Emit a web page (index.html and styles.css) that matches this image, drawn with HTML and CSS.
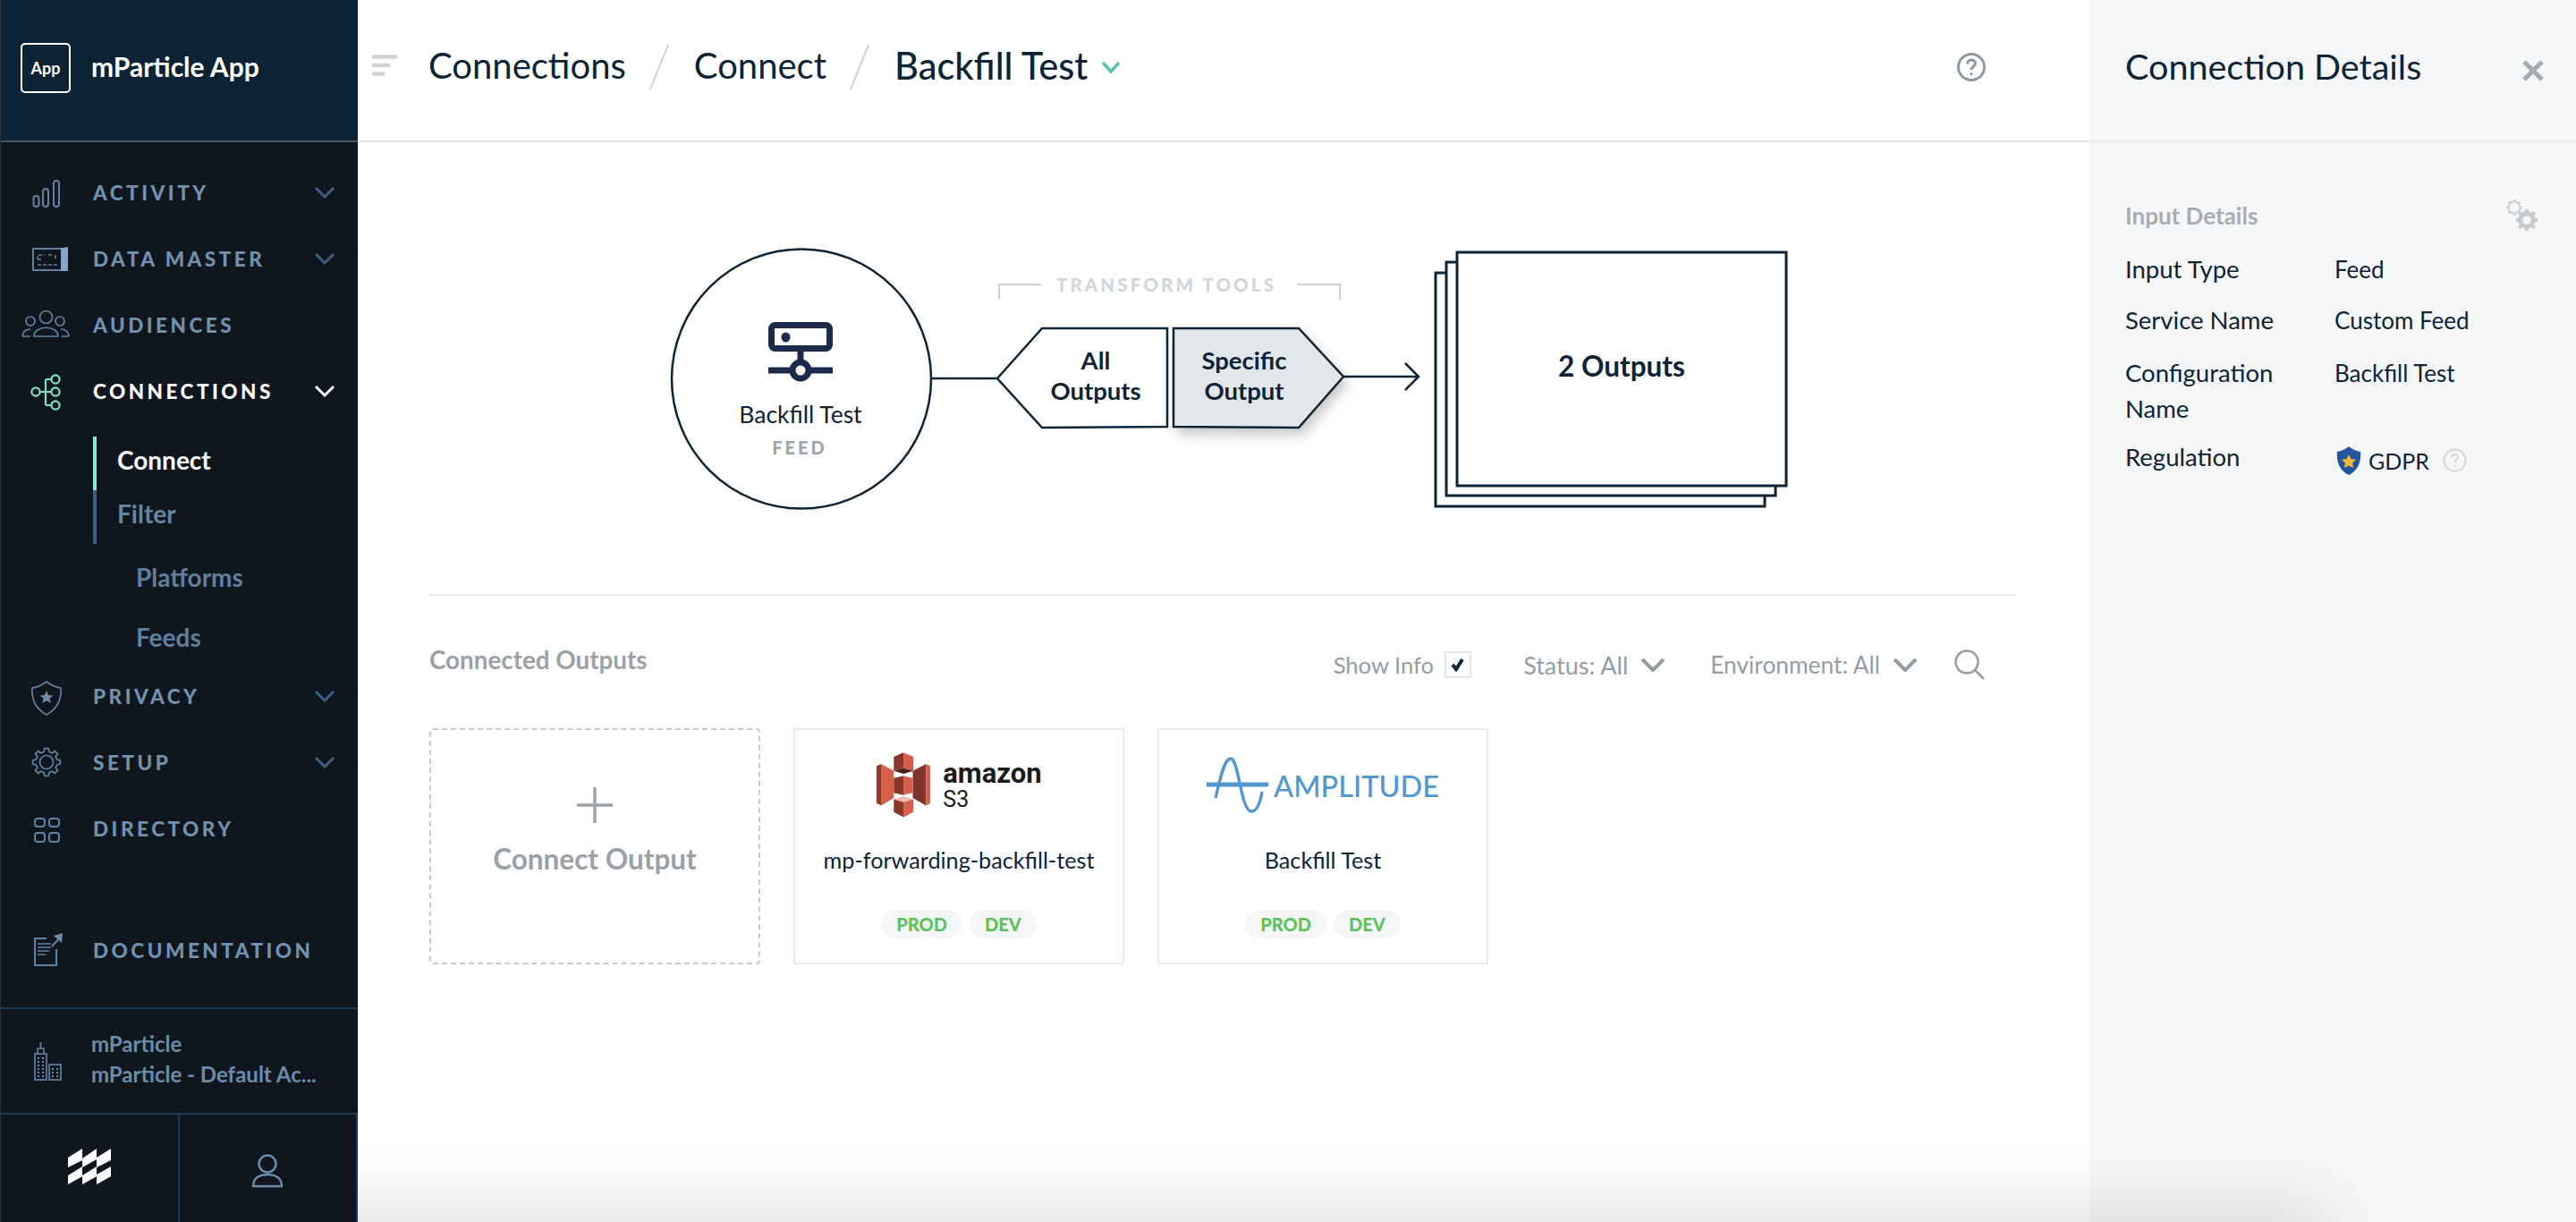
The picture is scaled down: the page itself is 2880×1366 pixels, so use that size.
FILE: index.html
```html
<!DOCTYPE html>
<html lang="en">
<head>
<meta charset="utf-8">
<title>mParticle App - Connections</title>
<link rel="stylesheet" href="styles.css">
</head>
<body>
<div class="app">
  <aside class="sidebar">
    <div class="brand">
      <div class="brand-box">App</div>
      <div class="brand-name">mParticle App</div>
    </div>
    <nav class="nav">
      <div class="nav-item">
        <svg class="nav-icon" viewBox="0 0 60 44"><g class="ic"><rect x="15.5" y="26" width="6" height="12" rx="3"/><rect x="26" y="18" width="6" height="20" rx="3"/><rect x="38" y="9" width="6" height="29" rx="3"/></g></svg>
        <span class="nav-label">ACTIVITY</span>
        <svg class="chev" viewBox="0 0 24 16"><path d="M2 3l10 10L22 3"/></svg>
      </div>
      <div class="nav-item">
        <svg class="nav-icon" viewBox="0 0 60 44"><g class="ic"><rect x="15" y="11" width="38" height="24"/><path class="ic-fill" d="M46 11c2-1 6-2 8-2v24c0 2-1 3-3 3h-5z"/><path class="ic-thin" d="M20 23v-5h8M20 23h6M32 18h4M40 18v6M20 29h22" stroke-dasharray="4 2"/></g></svg>
        <span class="nav-label">DATA MASTER</span>
        <svg class="chev" viewBox="0 0 24 16"><path d="M2 3l10 10L22 3"/></svg>
      </div>
      <div class="nav-item">
        <svg class="nav-icon" viewBox="0 0 60 44"><g class="ic ic-m"><circle cx="29.5" cy="13.5" r="7"/><circle cx="12" cy="18" r="5"/><circle cx="45" cy="18" r="5"/><path d="M16 35c0-13 27-13 27 0z"/><path d="M3 35c0-5 4-8 9-8M12 35H3M55 35c0-5-4-8-9-8M47 35h8"/></g></svg>
        <span class="nav-label">AUDIENCES</span>
      </div>
      <div class="nav-item nav-item-active">
        <svg class="nav-icon" viewBox="0 0 60 44"><g class="ic ic-green"><circle cx="18" cy="23" r="4.6"/><circle cx="40" cy="9" r="4.6"/><circle cx="40" cy="23" r="4.6"/><circle cx="40" cy="38" r="4.6"/><path d="M29 9v29M23 23h12M29 9h6M29 38h6"/></g></svg>
        <span class="nav-label">CONNECTIONS</span>
        <svg class="chev" viewBox="0 0 24 16"><path d="M2 3l10 10L22 3"/></svg>
      </div>
      <div class="sub-tabs">
        <div class="sub-tab sub-tab-active">Connect</div>
        <div class="sub-tab">Filter</div>
      </div>
      <div class="sub-links">
        <div class="sub-link">Platforms</div>
        <div class="sub-link">Feeds</div>
      </div>
      <div class="nav-item">
        <svg class="nav-icon" viewBox="0 0 60 44"><g class="ic ic-m"><path d="M30 6c5 4 10 6 16 7 1 14-5 24-16 30-11-6-17-16-16-30 6-1 11-3 16-7z"/></g><polygon class="ic-solid" points="30,16 32.2,21 37.5,21.4 33.5,24.8 34.8,30 30,27.2 25.2,30 26.5,24.8 22.5,21.4 27.8,21"/></svg>
        <span class="nav-label">PRIVACY</span>
        <svg class="chev" viewBox="0 0 24 16"><path d="M2 3l10 10L22 3"/></svg>
      </div>
      <div class="nav-item">
        <svg class="nav-icon" viewBox="-30 -22 60 44"><g class="ic ic-m"><polygon points="11.64,-2.9 15.35,-2.16 15.35,2.16 11.64,2.9 10.28,6.18 12.38,9.33 9.33,12.38 6.18,10.28 2.9,11.64 2.16,15.35 -2.16,15.35 -2.9,11.64 -6.18,10.28 -9.33,12.38 -12.38,9.33 -10.28,6.18 -11.64,2.9 -15.35,2.16 -15.35,-2.16 -11.64,-2.9 -10.28,-6.18 -12.38,-9.33 -9.33,-12.38 -6.18,-10.28 -2.9,-11.64 -2.16,-15.35 2.16,-15.35 2.9,-11.64 6.18,-10.28 9.33,-12.38 12.38,-9.33 10.28,-6.18"/><circle r="7.5"/></g></svg>
        <span class="nav-label">SETUP</span>
        <svg class="chev" viewBox="0 0 24 16"><path d="M2 3l10 10L22 3"/></svg>
      </div>
      <div class="nav-item">
        <svg class="nav-icon" viewBox="0 0 60 44"><g class="ic"><rect x="17" y="11" width="11" height="9" rx="3"/><rect x="33" y="11" width="11" height="9" rx="3"/><rect x="17" y="27" width="11" height="10" rx="3"/><rect x="33" y="27" width="11" height="10" rx="3"/></g></svg>
        <span class="nav-label">DIRECTORY</span>
      </div>
      <div class="nav-item nav-item-doc">
        <svg class="nav-icon" viewBox="0 0 60 44"><g class="ic"><path d="M30 9H17v30h24V21"/><path class="ic-thin" d="M20 15h15M20 19h15M20 23h13M20 27h9"/><path d="M36 18l9-10"/></g><polygon class="ic-solid" points="38,6 48,3 47,14"/></svg>
        <span class="nav-label">DOCUMENTATION</span>
      </div>
    </nav>
    <div class="account">
      <svg class="account-icon" viewBox="0 0 34 44"><g class="ic ic-m"><rect x="3" y="14" width="13" height="29"/><rect x="19" y="26" width="13" height="17"/><path d="M6 14V8h7v6M9.500 8V1"/></g><path class="dots" d="M7 18v22M12 18v22M23 30v10M28 30v10"/></svg>
      <div class="account-text">
        <div class="account-line">mParticle</div>
        <div class="account-line">mParticle - Default Ac...</div>
      </div>
    </div>
    <div class="tabs">
      <div class="tab tab-logo">
        <svg class="logo-mark" viewBox="0 0 48 40"><path d="M0 10 16 0v13L0 21zM16 11 32 0v12l-16 9zM32 10 48 0v13l-16 8zM0 30l16-10v11L0 40zM16 30l16-10v11l-16 9zM32 29l16-9v11l-16 9z"/></svg>
      </div>
      <div class="tab">
        <svg class="user-icon" viewBox="0 0 36 38"><circle cx="18" cy="11" r="9.500"/><path d="M2 36c0-10 8-13 16-13s16 3 16 13z"/></svg>
      </div>
    </div>
  </aside>

  <main class="content">
    <header class="topbar">
      <svg class="menu-icon" viewBox="0 0 28 24"><path d="M2 2.500h24M2 12h16M2 21.500h10"/></svg>
      <span class="crumb crumb-first">Connections</span>
      <span class="slash"></span>
      <span class="crumb">Connect</span>
      <span class="slash"></span>
      <span class="crumb crumb-current">Backfill Test</span>
      <svg class="crumb-chev" viewBox="0 0 22 14"><path d="M2 2l9 10 9-10"/></svg>
      <svg class="help-icon" viewBox="0 0 32 32"><circle cx="16" cy="16" r="14.500"/><path d="M11.500 12.500c0-6 9-6 9-.5 0 3.500-4.500 3.500-4.500 7"/><circle class="help-dot" cx="16" cy="23.500" r="1.600"/></svg>
    </header>

    <section class="diagram">
      <svg class="diagram-art" viewBox="480 159 1600 440">
        <circle class="d-line" cx="896" cy="423.500" r="145"/>
        <path class="d-line" d="M1041 423h74"/>
        <polygon class="d-line d-white" points="1115,423 1165,367 1305,367 1305,477 1165,478"/>
        <polygon class="d-line d-active" points="1312,367 1452,367 1502,421 1452,478 1312,477"/>
        <path class="d-line" d="M1502 421h84M1571 406l15 15-15 15"/>
        <path class="d-bracket" d="M1117 335v-17h47M1450 318h48v17"/>
        <rect class="d-stack" x="1605" y="305" width="368" height="261"/>
        <rect class="d-stack" x="1617" y="293" width="368" height="261"/>
        <rect class="d-stack" x="1629" y="282" width="368" height="261"/>
        <g class="feed-icon">
          <rect x="862.500" y="363.500" width="65" height="26" rx="4"/>
          <path d="M895 393v10M859 414h72"/>
          <circle class="feed-hole" cx="895" cy="414" r="9"/>
        </g>
        <ellipse class="feed-dot" cx="878.500" cy="377" rx="5" ry="5.500"/>
      </svg>
      <div class="d-label d-feedname">Backfill Test</div>
      <div class="d-label d-feedtype">FEED</div>
      <div class="d-label d-transform">TRANSFORM TOOLS</div>
      <div class="d-label d-all">All<br>Outputs</div>
      <div class="d-label d-specific">Specific<br>Output</div>
      <div class="d-label d-outputs">2 Outputs</div>
    </section>

    <section class="outputs">
      <div class="outputs-head">
        <h2 class="outputs-title">Connected Outputs</h2>
        <div class="filters">
          <span class="filter filter-show">Show Info</span>
          <span class="checkbox"><svg viewBox="0 0 18 18"><path d="M3 9l4 5 7-11"/></svg></span>
          <span class="filter filter-status">Status: All</span>
          <svg class="filter-chev" viewBox="0 0 28 16"><path d="M2 2l12 12L26 2"/></svg>
          <span class="filter filter-env">Environment: All</span>
          <svg class="filter-chev" viewBox="0 0 28 16"><path d="M2 2l12 12L26 2"/></svg>
          <svg class="search-icon" viewBox="0 0 34 34"><circle cx="14" cy="14" r="12.500"/><path d="M23 23l10 10"/></svg>
        </div>
      </div>
      <div class="cards">
        <div class="card card-add">
          <svg class="plus" viewBox="0 0 40 40"><path d="M20 0v40M0 20h40"/></svg>
          <div class="add-label">Connect Output</div>
        </div>
        <div class="card">
          <div class="card-logo">
            <svg class="s3-art" viewBox="0 0 200 240">
              <polygon fill="#8c3a2a" points="2,52 18,44 18,191 2,182"/>
              <polygon fill="#d65f4c" points="18,44 63,69 63,164 18,191"/>
              <polygon fill="#7f3527" points="130,69 177,44 177,191 130,164"/>
              <polygon fill="#d65f4c" points="177,44 192,52 192,182 177,191"/>
              <polygon fill="#86382a" points="63,19 97,4 97,59 63,69"/>
              <polygon fill="#d65f4c" points="97,4 132,19 132,69 97,59"/>
              <polygon fill="#4e1f16" points="63,69 97,59 132,69 97,79"/>
              <polygon fill="#86382a" points="63,94 97,86 97,154 63,146"/>
              <polygon fill="#d65f4c" points="97,86 130,94 130,146 97,154"/>
              <polygon fill="#efb6a9" points="63,169 97,159 132,169 97,179"/>
              <polygon fill="#86382a" points="63,169 97,179 97,232 63,214"/>
              <polygon fill="#d65f4c" points="97,179 132,169 132,214 97,232"/>
            </svg>
            <div class="s3-text"><span class="s3-amazon">amazon</span><span class="s3-name">S3</span></div>
          </div>
          <div class="card-name">mp-forwarding-backfill-test</div>
          <div class="badges"><span class="badge">PROD</span><span class="badge">DEV</span></div>
        </div>
        <div class="card">
          <div class="card-logo">
            <svg class="amp-art" viewBox="0 0 70 64"><path class="amp-wave" d="M10 46C14 30 19 2 27 2c9 0 11 58 23 59 6 0 10-10 12-22"/><path class="amp-bar" d="M1 31h66"/></svg>
            <span class="amp-text">AMPLITUDE</span>
          </div>
          <div class="card-name">Backfill Test</div>
          <div class="badges"><span class="badge">PROD</span><span class="badge">DEV</span></div>
        </div>
      </div>
    </section>
  </main>

  <aside class="panel">
    <header class="panel-head">
      <h1 class="panel-title">Connection Details</h1>
      <svg class="close-icon" viewBox="0 0 26 26"><path d="M3 3l20 20M23 3L3 23"/></svg>
    </header>
    <div class="panel-body">
      <div class="panel-sub">
        <span class="panel-subtitle">Input Details</span>
        <svg class="gears" viewBox="0 0 36 36">
          <g transform="translate(9 9) scale(.5)"><polygon class="gear-outline" points="11.64,-2.9 15.35,-2.16 15.35,2.16 11.64,2.9 10.28,6.18 12.38,9.33 9.33,12.38 6.18,10.28 2.9,11.64 2.16,15.35 -2.16,15.35 -2.9,11.64 -6.18,10.28 -9.33,12.38 -12.38,9.33 -10.28,6.18 -11.64,2.9 -15.35,2.16 -15.35,-2.16 -11.64,-2.9 -10.28,-6.18 -12.38,-9.33 -9.33,-12.38 -6.18,-10.28 -2.9,-11.64 -2.16,-15.35 2.16,-15.35 2.9,-11.64 6.18,-10.28 9.33,-12.38 12.38,-9.33 10.28,-6.18"/></g>
          <g transform="translate(23 23) scale(.8)"><polygon class="gear-solid" points="11.64,-2.9 15.35,-2.16 15.35,2.16 11.64,2.9 10.28,6.18 12.38,9.33 9.33,12.38 6.18,10.28 2.9,11.64 2.16,15.35 -2.16,15.35 -2.9,11.64 -6.18,10.28 -9.33,12.38 -12.38,9.33 -10.28,6.18 -11.64,2.9 -15.35,2.16 -15.35,-2.16 -11.64,-2.9 -10.28,-6.18 -12.38,-9.33 -9.33,-12.38 -6.18,-10.28 -2.9,-11.64 -2.16,-15.35 2.16,-15.35 2.9,-11.64 6.18,-10.28 9.33,-12.38 12.38,-9.33 10.28,-6.18"/><circle class="gear-hole" r="6"/></g>
        </svg>
      </div>
      <dl class="details">
        <dt>Input Type</dt><dd>Feed</dd>
        <dt>Service Name</dt><dd>Custom Feed</dd>
        <dt class="detail-shift">Configuration Name</dt><dd class="detail-shift">Backfill Test</dd>
        <dt>Regulation</dt>
        <dd class="gdpr">
          <svg class="gdpr-shield" viewBox="0 0 28 32"><path d="M14 0c3 3 8 5 13 6 1 12-3 21-13 26C4 27 0 18 1 6c5-1 10-3 13-6z"/><polygon points="14,9 16.500,14 22,14.800 18,18.600 19,24 14,21.400 9,24 10,18.600 6,14.800 11.500,14"/></svg>
          <span>GDPR</span>
          <svg class="gdpr-help" viewBox="0 0 28 28"><circle cx="14" cy="14" r="12.500"/><path d="M10.500 11c0-5 7-5 7-.5 0 3-3.500 3-3.500 6M14 19.500v2"/></svg>
        </dd>
      </dl>
    </div>
  </aside>
  <div class="bottom-shade"></div>
</div>
</body>
</html>
```

FILE: styles.css
```css
* { box-sizing: border-box; }
html, body { margin: 0; padding: 0; height: 100%; background: #fff; }
body { font-family: "Lato", "Liberation Sans", sans-serif; color: #0d2336; }

.app { position: relative; display: flex; width: 2880px; height: 1366px; overflow: hidden; }

/* Sidebar */
.sidebar { position: relative; z-index: 2; flex: 0 0 400px; display: flex; flex-direction: column; background: #10161d; border-left: 1px solid #2a3038; }
.brand { flex: 0 0 159px; display: flex; align-items: flex-start; padding: 48px 0 0 22px; background: #0c2336; border-bottom: 2px solid #4a5666; }
.brand-box { width: 56px; height: 56px; border: 2px solid #fff; border-radius: 5px; color: #fff; font-size: 18px; font-weight: 700; display: flex; align-items: center; justify-content: center; }
.brand-name { margin: -2px 0 0 23px; color: #fff; font-size: 30px; font-weight: 700; line-height: 56px; }

.nav { flex: 1; min-height: 0; display: flex; flex-direction: column; padding-top: 19px; }
.nav-item { flex: 0 0 74px; display: flex; align-items: center; color: #7092b0; padding-left: 21px; }
.nav-icon { flex: 0 0 60px; width: 60px; height: 44px; margin-right: 22px; }
.nav-label { flex: 1; font-size: 22.500px; font-weight: 900; letter-spacing: 3.500px; }
.nav-item-active { color: #fff; }
.chev { flex: 0 0 24px; width: 24px; height: 16px; margin-right: 25px; fill: none; stroke: #3e5f86; stroke-width: 3; }
.nav-item-active .chev { stroke: #fff; }
.nav-item-doc { margin-top: auto; margin-bottom: 27px; }

.ic { fill: none; stroke: #5f82a3; stroke-width: 2; }
.ic-m { stroke-width: 1.7; }
.ic-green { stroke: #7be3c0; stroke-width: 2.200; }
.ic-fill { fill: #88a6c4; stroke: none; }
.ic-thin { stroke-width: 1.600; }
.ic-solid { fill: #6b8cab; }

.sub-tabs { margin: 14px 0 0 103px; }
.sub-tab { height: 60px; padding: 0 0 9px 23px; display: flex; align-items: center; border-left: 4px solid #3c5f8a; color: #6685a5; font-size: 28px; font-weight: 700; }
.sub-tab-active { border-left-color: #86ebcb; color: #fff; }
.sub-links { height: 133px; padding: 3px 0 0 151px; }
.sub-link { height: 67px; display: flex; align-items: center; color: #5f7f9f; font-size: 28px; font-weight: 700; }

.account { flex: 0 0 120px; display: flex; align-items: center; padding: 0 0 4px 35px; border-top: 2px solid #1d3a55; border-bottom: 2px solid #1d3a55; }
.account-icon { width: 34px; height: 44px; margin: 4px 32px 0 0; }
.dots { fill: none; stroke: #6b8cab; stroke-width: 2; stroke-dasharray: 2 2; }
.account-line { color: #6b8cab; font-size: 24px; font-weight: 700; line-height: 34px; white-space: nowrap; }

.tabs { flex: 0 0 120px; display: flex; }
.tab { flex: 1; display: flex; align-items: flex-start; justify-content: center; padding-top: 42px; border-right: 2px solid #1d3a55; }
.logo-mark { width: 48px; height: 40px; fill: #fff; margin-top: -4px; }
.user-icon { width: 36px; height: 38px; fill: none; stroke: #6b8cab; stroke-width: 2.500; stroke-linejoin: round; margin-top: 2px; }

/* Main content */
.content { flex: 1; display: flex; flex-direction: column; min-width: 0; }
.topbar { position: relative; flex: 0 0 159px; display: flex; align-items: center; padding: 0 116px 12px 16px; border-bottom: 2px solid #ebebeb; }
.menu-icon { width: 28px; height: 24px; fill: none; stroke: #d0d3d6; stroke-width: 4.500; stroke-linecap: round; }
.crumb { font-size: 40px; font-weight: 400; color: #0d2336; white-space: nowrap; line-height: 50px; }
.crumb-first { margin-left: 35px; }
.crumb-current { font-size: 41.500px; font-weight: 500; }
.slash { width: 2px; height: 50px; margin: 5px 38px 0 36px; background: #cfcfcf; transform: skewX(-22deg); }
.crumb-chev { width: 22px; height: 14px; margin: 4px 0 0 15px; fill: none; stroke: #52c7a2; stroke-width: 3.500; }
.help-icon { width: 32px; height: 32px; margin: 4px 0 0 auto; fill: none; stroke: #8d99a3; stroke-width: 3; }
.help-dot { fill: #8d99a3; stroke: none; }

.diagram { position: relative; flex: 0 0 507px; margin: 0 81px 0 80px; border-bottom: 2px solid #e9e9e9; }
.diagram-art { position: absolute; left: 0; top: 0; width: 1600px; height: 440px; overflow: visible; }
.d-line { fill: none; stroke: #0d2336; stroke-width: 2.500; stroke-linejoin: miter; }
.d-white { fill: #fff; }
.d-active { fill: #e4e7ea; filter: drop-shadow(4px 7px 7px rgba(0, 0, 0, .22)); }
.d-bracket { fill: none; stroke: #cfd2d5; stroke-width: 2; }
.d-stack { fill: #fff; stroke: #0d2336; stroke-width: 3; }
.feed-icon { fill: none; stroke: #1c2b4b; stroke-width: 7; }
.feed-hole { fill: #fff; }
.feed-dot { fill: #1c2b4b; }

.d-label { position: absolute; transform: translate(-50%, -50%); white-space: nowrap; text-align: center; }
.d-feedname { left: 415px; top: 304px; font-size: 26.500px; }
.d-feedtype { left: 414px; top: 341px; font-size: 20px; font-weight: 900; letter-spacing: 3px; color: #9fa6ab; }
.d-transform { left: 824px; top: 159px; font-size: 20.500px; font-weight: 900; letter-spacing: 3.100px; color: #d2d5d8; }
.d-all, .d-specific { top: 261px; font-size: 27.500px; font-weight: 700; line-height: 34px; }
.d-all { left: 745px; }
.d-specific { left: 911px; }
.d-outputs { left: 1333px; top: 250px; font-size: 31.500px; font-weight: 700; }

/* Outputs */
.outputs { padding: 0 81px 0 80px; }
.outputs-head { display: flex; justify-content: space-between; height: 148px; padding-top: 54px; }
.outputs-title { margin: 0; font-size: 27.800px; font-weight: 700; line-height: 36px; color: #9aa2a8; }
.filters { display: flex; align-items: center; height: 36px; margin: 5px 36px 0 0; }
.filter { font-size: 26.300px; color: #959da3; white-space: nowrap; }
.filter-show { font-size: 25.600px; }
.checkbox { width: 30px; height: 30px; margin-left: 12px; border: 2px solid #e6e6e6; display: flex; align-items: center; justify-content: center; }
.checkbox svg { width: 18px; height: 18px; fill: none; stroke: #0d2336; stroke-width: 4; }
.filter-status { margin-left: 58px; font-size: 27px; }
.filter-env { margin-left: 50px; }
.filter-chev { width: 28px; height: 16px; margin-left: 14px; fill: none; stroke: #959da3; stroke-width: 4; }
.search-icon { width: 34px; height: 34px; margin-left: 41px; fill: none; stroke: #959da3; stroke-width: 2.500; }

.cards { display: flex; gap: 37px; }
.card { width: 370px; height: 264px; padding-top: 24px; border: 2px solid #e9e9e9; display: flex; flex-direction: column; align-items: center; }
.card-add { padding-top: 64px; border: 2px dashed #c9c9c9; border-radius: 4px; }
.plus { width: 40px; height: 40px; fill: none; stroke: #9ca3a8; stroke-width: 3.500; }
.add-label { margin-top: 20px; font-size: 31.500px; font-weight: 700; line-height: 40px; color: #9aa2a8; }
.card-logo { height: 76px; display: flex; align-items: center; }
.s3-art { width: 64px; height: 76px; margin-right: 11px; }
.s3-text { display: flex; flex-direction: column; }
.s3-amazon { font-family: "Roboto", sans-serif; font-size: 31px; font-weight: 700; line-height: 32px; color: #1b1b1b; }
.s3-name { font-family: "Roboto", sans-serif; font-size: 25px; line-height: 26px; color: #1b1b1b; }
.amp-art { width: 70px; height: 64px; margin-right: 5px; fill: none; stroke: #5098d3; }
.amp-wave { stroke-width: 3.400; }
.amp-bar { stroke-width: 5; stroke-linecap: round; }
.amp-text { font-size: 32.500px; font-weight: 500; color: #5098d3; white-space: nowrap; }
.card-name { margin-top: 29px; font-size: 25.200px; line-height: 32px; white-space: nowrap; }
.badges { display: flex; gap: 8px; margin-top: 40px; }
.badge { height: 32px; padding: 0 17px; border-radius: 16px; background: #f5f6f8; color: #5dc25a; font-size: 20px; font-weight: 900; line-height: 32px; }

/* Right panel */
.panel { flex: 0 0 544px; display: flex; flex-direction: column; background: #f6f7f9; }
.panel-head { flex: 0 0 159px; display: flex; align-items: flex-start; justify-content: space-between; padding: 48px 35px 0 40px; border-bottom: 2px solid #ebebeb; }
.panel-title { margin: 0; font-size: 39.500px; font-weight: 400; line-height: 52px; color: #0d2336; }
.close-icon { width: 26px; height: 26px; margin-top: 18px; fill: none; stroke: #a5abb0; stroke-width: 5; }
.panel-body { padding: 62px 42px 0 40px; }
.panel-sub { display: flex; align-items: center; justify-content: space-between; height: 40px; margin-bottom: 20px; }
.panel-subtitle { font-size: 26px; font-weight: 700; color: #a7adb2; }
.gears { width: 36px; height: 36px; }
.gear-outline { fill: none; stroke: #c6cacd; stroke-width: 3; }
.gear-solid { fill: #c6cacd; }
.gear-hole { fill: #f6f7f9; }
.details { display: grid; grid-template-columns: 234px 1fr; row-gap: 16.500px; margin: 0; font-size: 27.500px; line-height: 40px; }
.details dt { width: 190px; color: #0d2336; }
.details dd { margin: 0; font-size: 26px; color: #0d2336; }
.details .detail-shift { margin-top: 3px; margin-bottom: -3px; }
.details .gdpr { display: flex; align-items: center; padding-top: 4px; font-size: 25px; }
.gdpr-shield { width: 28px; height: 32px; margin-left: 2px; fill: #24569f; }
.gdpr-shield polygon { fill: #f2b73b; }
.gdpr span { margin-left: 8px; }
.gdpr-help { width: 27px; height: 27px; margin-left: 15px; fill: none; stroke: #d8dadc; stroke-width: 2.500; }

.bottom-shade { position: absolute; z-index: 1; left: 300px; right: 290px; bottom: -40px; height: 40px; box-shadow: 0 0 80px 10px rgba(0, 0, 0, .16); background: #ddd; }
```
